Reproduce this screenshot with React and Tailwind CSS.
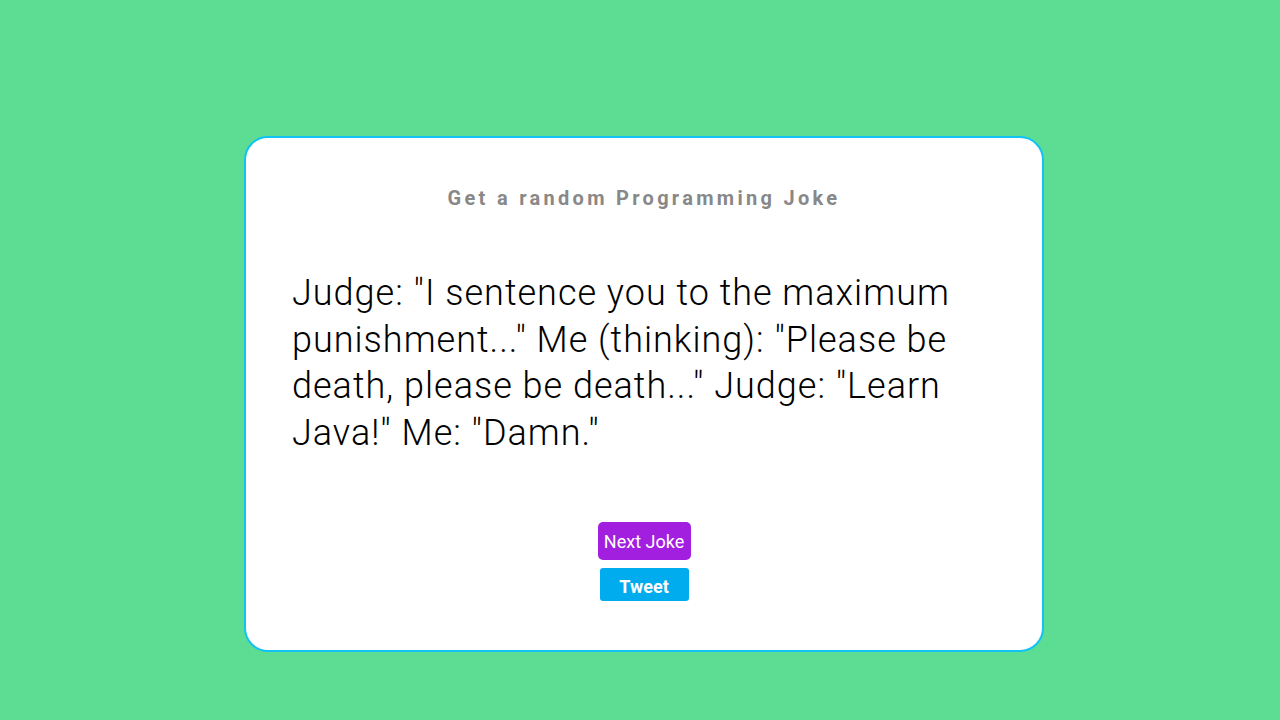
import React from 'react';

const JOKE =
  'Judge: "I sentence you to the maximum punishment..." Me (thinking): "Please be death, please be death..." Judge: "Learn Java!" Me: "Damn."';

export default function App() {
  return (
    <div className="min-h-[720px] w-full bg-[#5ddc93] pl-[8px] pt-[136px] font-['Roboto',sans-serif]">
      <div className="mx-auto flex w-[800px] h-[516px] flex-col items-center rounded-[24px] border-2 border-[#12c2f5] bg-white px-[46px] pt-[46px]">
        <h1 className="text-[20px] leading-[28px] font-bold tracking-[3.3px] text-[#888888]">
          Get a random Programming Joke
        </h1>
        <p className="mt-[58px] w-full text-[36px] leading-[46.5px] font-light tracking-[1px] text-black">{JOKE}</p>
        <button className="mt-[66px] h-[38px] w-[93px] rounded-[5px] bg-[#a31fe0] text-[18px] text-white">
          Next Joke
        </button>
        <button className="mt-[8px] h-[33px] w-[89px] rounded-[3px] bg-[#00acee] pt-[3px] text-[18px] font-bold text-white">
          Tweet
        </button>
      </div>
    </div>
  );
}
